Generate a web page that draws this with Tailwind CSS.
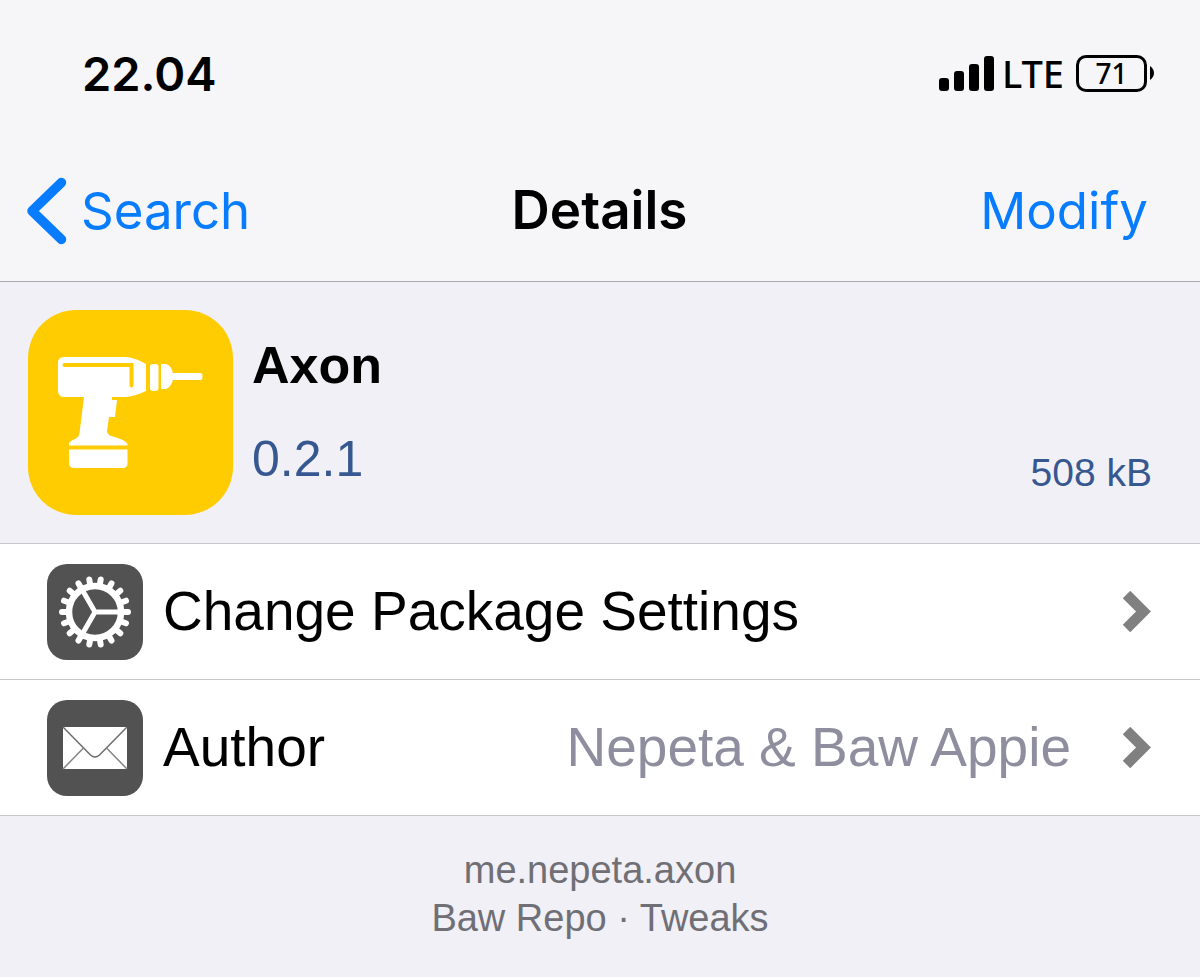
<!DOCTYPE html>
<html lang="en">
  <head>
    <meta charset="UTF-8" />
    <meta name="viewport" content="width=device-width, initial-scale=1.0" />
    <title>Details</title>
    <script src="https://cdn.jsdelivr.net/npm/@tailwindcss/browser@4"></script>
  </head>
  <body class="min-h-screen bg-[#f0f0f6] text-black font-['Liberation_Sans',Arial,sans-serif]">
    <header class="bg-[#f6f6f8] border-b border-[#aaaaae] font-[Inter,sans-serif]">
      <!-- Status bar -->
      <div class="flex items-center justify-between h-[146px] pl-[82px] pr-[46px]">
        <span class="text-[47px] leading-none font-semibold">22.04</span>
        <div class="flex items-center">
          <svg class="w-[55px] h-[35px]" viewBox="0 0 55 35" aria-hidden="true">
            <rect x="0" y="22" width="10" height="13" rx="3" />
            <rect x="15" y="15" width="10" height="20" rx="3" />
            <rect x="30" y="8" width="10" height="27" rx="3" />
            <rect x="45" y="0" width="10" height="35" rx="3" />
          </svg>
          <span class="ml-2 text-[38px] leading-none font-medium font-['Noto_Sans',sans-serif]">LTE</span>
          <div class="ml-3 flex items-center">
            <span class="flex items-center justify-center w-[71px] h-[37px] border-3 border-black rounded-[10px] text-[28px] leading-none font-medium font-['Noto_Sans',sans-serif]">71</span>
            <svg class="ml-[3px] w-1 h-3.5" viewBox="0 0 4 14" aria-hidden="true">
              <path d="M0 0Q4 3 4 7Q4 11 0 14Z" />
            </svg>
          </div>
        </div>
      </div>

      <!-- Navigation -->
      <nav class="grid grid-cols-3 items-center h-[135px] pb-1.5 pl-[27px] pr-[52px] text-[51px] leading-none">
        <a href="#" class="flex items-center gap-3.5 text-[#087cff]">
          <svg class="w-10 h-[68px] shrink-0" viewBox="0 0 40 68" aria-hidden="true">
            <path d="M34.500 5.500L5 34L34.500 62.500" fill="none" stroke="currentColor" stroke-width="9.500" stroke-linecap="round" stroke-linejoin="round" />
          </svg>
          Search
        </a>
        <h1 class="pl-6 text-center text-[53px] font-semibold">Details</h1>
        <button class="justify-self-end text-[#087cff]">Modify</button>
      </nav>
    </header>

    <main>
      <!-- Package -->
      <section class="flex gap-[19px] p-7 pr-12 border-b border-[#c8c8cc]">
        <svg class="w-[205px] h-[205px] shrink-0" viewBox="0 0 205 205" aria-hidden="true">
          <rect width="205" height="205" rx="48" fill="#ffcc02" />
          <g fill="#fff">
            <path d="M35 47H98Q108 48 118 54V81Q108 86 98 87H84V90H89L87 107H81L79 121Q79 124 83 126Q98 130 99.500 134V135.500H41V133Q42 131 49 128Q51 126 51.500 123L56 87H35Q30 86 30 81V52Q30 48 35 47Z" />
            <rect x="122" y="54" width="8.500" height="27" rx="3" />
            <path d="M133 54H138Q143 55 145 63H172.500Q174.500 63 174.500 66.500Q174.500 70 172.500 70H145Q143 77 138 79H133Z" />
            <path d="M41 139.500H99.500V153Q99.500 158 95 158H46Q41 158 41 153Z" />
          </g>
          <path d="M36.500 55H103.500V75.500" fill="none" stroke="#ffcc02" stroke-width="4" stroke-linecap="round" />
        </svg>
        <div class="flex flex-1 items-end justify-between">
          <div class="self-start pt-[26px]">
            <h2 class="text-[52px] leading-[58px] font-bold">Axon</h2>
            <p class="mt-9 text-[50px] leading-[58px] text-[#375791]">0.2.1</p>
          </div>
          <p class="pb-[18px] text-[39px] leading-[48px] text-[#375791]">508 kB</p>
        </div>
      </section>

      <!-- Rows -->
      <div class="bg-white text-[55px] leading-none">
        <a href="#" class="flex items-center gap-5 h-[136px] pl-[47px] pr-[49px] border-b border-[#c8c8cc]">
          <svg class="w-24 h-24 shrink-0" viewBox="0 0 96 96" aria-hidden="true">
            <rect width="96" height="96" rx="20" fill="#525252" />
            <g transform="translate(48 48)" fill="none" stroke="#fff">
              <path d="M-33 0H33M-31 -11.300L31 11.300M-25.300 -21.200L25.300 21.200M-16.500 -28.600L16.500 28.600M-5.700 -32.500L5.700 32.500M5.700 -32.500L-5.700 32.500M16.500 -28.600L-16.500 28.600M25.300 -21.200L-25.300 21.200M31 -11.300L-31 11.300" stroke-width="6" stroke-linecap="round" />
              <circle r="26" fill="#525252" stroke-width="6.500" />
              <path d="M25 0H0L-12.500 -21.700M0 0L-12.500 21.700" stroke-width="5" />
            </g>
          </svg>
          <span class="flex-1">Change Package Settings</span>
          <svg class="w-7 h-[42px] shrink-0" viewBox="0 0 28 42" aria-hidden="true">
            <path d="M3.500 3.500L20.500 20.500L3.500 37.500" fill="none" stroke="#808080" stroke-width="10.500" />
          </svg>
        </a>
        <a href="#" class="flex items-center gap-5 h-[136px] pl-[47px] pr-[49px] border-b border-[#c8c8cc]">
          <svg class="w-24 h-24 shrink-0" viewBox="0 0 96 96" aria-hidden="true">
            <rect width="96" height="96" rx="20" fill="#525252" />
            <rect x="16" y="27" width="64" height="42" fill="#fff" />
            <g fill="none" stroke="#6c6c6c" stroke-width="1.500">
              <path d="M16 27L43.500 55Q48 59 52.500 55L80 27" />
              <path d="M16 69L36.500 48M80 69L59.500 48" stroke="#858585" />
            </g>
          </svg>
          <span class="flex-1">Author</span>
          <span class="pr-8 text-[#8e8e9f]">Nepeta &amp; Baw Appie</span>
          <svg class="w-7 h-[42px] shrink-0" viewBox="0 0 28 42" aria-hidden="true">
            <path d="M3.500 3.500L20.500 20.500L3.500 37.500" fill="none" stroke="#808080" stroke-width="10.500" />
          </svg>
        </a>
      </div>
    </main>

    <footer class="pt-[30px] text-center text-[38px] leading-[48px] text-[#6f6f75]">
      <p>me.nepeta.axon</p>
      <p>Baw Repo · Tweaks</p>
    </footer>
  </body>
</html>
